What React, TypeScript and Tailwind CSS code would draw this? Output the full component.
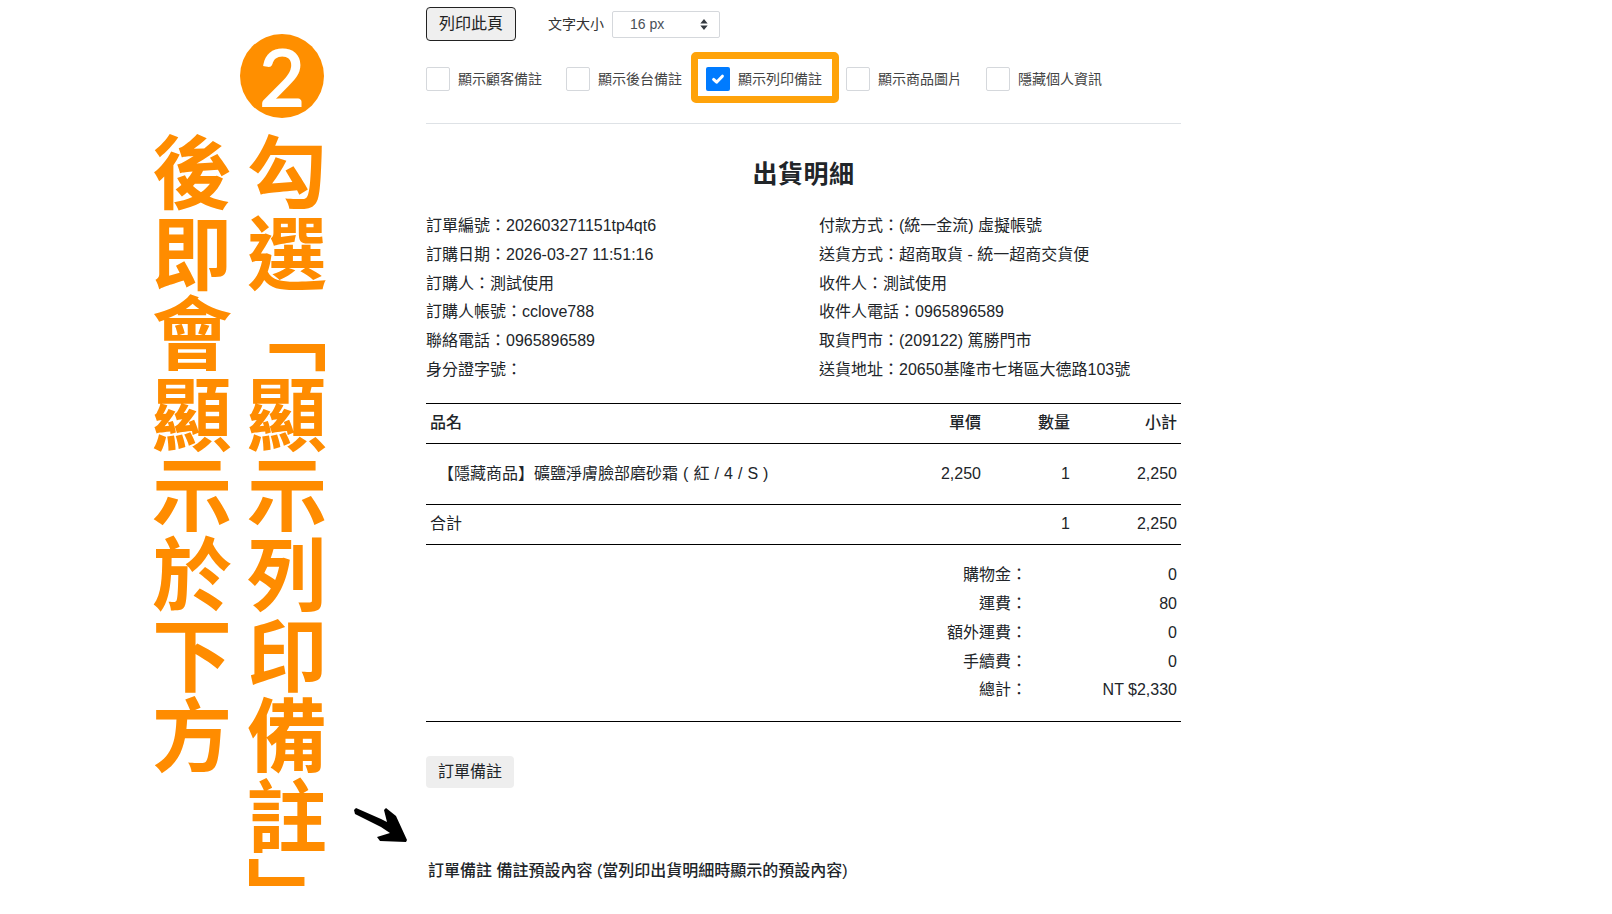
/**
 * Shipping-detail print page with the orange how-to annotation on the left.
 */
const CJK = 'font-["Liberation_Sans","Noto_Sans_CJK_TC",sans-serif]';

const OPTIONS = [
  { label: '顯示顧客備註', checked: false },
  { label: '顯示後台備註', checked: false },
  { label: '顯示列印備註', checked: true },
  { label: '顯示商品圖片', checked: false },
  { label: '隱藏個人資訊', checked: false },
];

const LEFT_INFO = [
  '訂單編號：202603271151tp4qt6',
  '訂購日期：2026-03-27 11:51:16',
  '訂購人：測試使用',
  '訂購人帳號：cclove788',
  '聯絡電話：0965896589',
  '身分證字號：',
];

const RIGHT_INFO = [
  '付款方式：(統一金流) 虛擬帳號',
  '送貨方式：超商取貨 - 統一超商交貨便',
  '收件人：測試使用',
  '收件人電話：0965896589',
  '取貨門市：(209122) 篤勝門市',
  '送貨地址：20650基隆市七堵區大德路103號',
];

const FEES = [
  { label: '購物金：', value: '0' },
  { label: '運費：', value: '80' },
  { label: '額外運費：', value: '0' },
  { label: '手續費：', value: '0' },
  { label: '總計：', value: 'NT $2,330' },
];

function Option({ label, checked }: { label: string; checked: boolean }) {
  return (
    <label className="relative flex w-[110px] items-center gap-2 whitespace-nowrap text-[14px] leading-6 text-[#444]">
      {checked ? (
        <span className="absolute -left-[15px] -top-[15px] h-[51px] w-[148px] rounded-[5px] border-[7px] border-[#ffa30a]" />
      ) : null}
      {checked ? (
        <span className="flex h-6 w-6 shrink-0 items-center justify-center rounded-[2px] bg-[#007bff]">
          <svg viewBox="0 0 16 16" className="h-4 w-4" fill="none" stroke="white" strokeWidth="3" strokeLinecap="round" strokeLinejoin="round">
            <path d="M3.6 8.4 6.6 11.2 12.4 5.2" />
          </svg>
        </span>
      ) : (
        <span className="h-6 w-6 shrink-0 rounded-[2px] border border-[#d5d8dc] bg-white" />
      )}
      {label}
    </label>
  );
}

function Annotation() {
  return (
    <aside className="relative w-[426px] shrink-0 pt-[34px]">
      <div className="ml-[240px] flex h-[84px] w-[84px] items-center justify-center rounded-full bg-[#ff8f00] font-['Lato',sans-serif] text-[78px] font-normal leading-none text-white [-webkit-text-stroke:2px_white]">
        2
      </div>
      {/* closing bracket gets a negative advance: its ink sits high in the em box, the rest would run off the page */}
      <p className="ml-[144px] mt-[14px] whitespace-nowrap font-['Noto_Sans_CJK_TC',sans-serif] text-[80px] font-bold leading-[95px] tracking-[0.4px] text-[#ff8c00] [writing-mode:vertical-rl]">
        勾選「顯示列印備註<span className="tracking-[-24px]">」</span>
        <br />
        後即會顯示於下方
      </p>
      <svg viewBox="0 0 56 36" className="absolute left-[353px] top-[807px] h-9 w-14" fill="black">
        <path d="M1 3 3 1 28 12 34 15 31 3 33 1 43 9 54 33 53 35 27 34 24 30 37 26 28 20 2 7Z" />
      </svg>
    </aside>
  );
}

export default function App() {
  return (
    <div className={`flex h-[914px] overflow-hidden bg-white text-[#212529] ${CJK}`}>
      <Annotation />
      <main className="w-[755px] shrink-0">
        <div className="flex items-center pt-[7px]">
          <button className="h-[34px] w-[90px] rounded-[4px] border border-[#222] bg-[#efefef] text-[16px] text-[#222]">列印此頁</button>
          <span className="ml-8 w-[56px] whitespace-nowrap text-[14px] text-[#333]">文字大小</span>
          <div className="ml-2 flex h-[27px] w-[108px] items-center justify-between rounded-[2px] border border-[#d5d8dc] pl-[17px] pr-[11px] text-[14px] text-[#495057]">
            16 px
            <svg viewBox="0 0 8 12" className="h-[11px] w-2" fill="#343a40">
              <path d="M4 0 8 5H0ZM4 12 0 7H8Z" />
            </svg>
          </div>
        </div>
        <div className="mt-[26px] flex items-center gap-[30px]">
          {OPTIONS.map((o) => (
            <Option key={o.label} label={o.label} checked={o.checked} />
          ))}
        </div>
        <hr className="mt-[32px] border-[#dee2e6]" />

        <h1 className="mt-[32px] text-center text-[25px] font-bold leading-9 tracking-[0.5px]">出貨明細</h1>

        <div className="mt-[20px] flex text-[16px] leading-[28.8px]">
          <div className="w-[393px]">
            {LEFT_INFO.map((t) => <div key={t}>{t}</div>)}
          </div>
          <div>
            {RIGHT_INFO.map((t) => <div key={t}>{t}</div>)}
          </div>
        </div>

        <table className="mt-[18px] w-full border-collapse text-[16px]">
          <thead>
            <tr className="h-[40px] border-y border-black">
              <th className="px-1 text-left font-medium">品名</th>
              <th className="w-[100px] px-1 text-right font-medium">單價</th>
              <th className="w-[89px] px-1 text-right font-medium">數量</th>
              <th className="w-[107px] px-1 text-right font-medium">小計</th>
            </tr>
          </thead>
          <tbody>
            <tr className="h-[61px]">
              <td className="py-1 pl-3 pr-1 [word-spacing:0.6px]">【隱藏商品】礦鹽淨膚臉部磨砂霜 ( 紅 / 4 / S )</td>
              <td className="px-1 text-right">2,250</td>
              <td className="px-1 text-right">1</td>
              <td className="px-1 text-right">2,250</td>
            </tr>
            <tr className="h-[40px] border-y border-black">
              <td className="px-1">合計</td>
              <td />
              <td className="px-1 text-right">1</td>
              <td className="px-1 text-right">2,250</td>
            </tr>
          </tbody>
        </table>

        <div className="mt-[16.5px] border-b border-black pb-[15.5px] text-[16px] leading-[28.8px]">
          {FEES.map((f) => (
            <div key={f.label} className="flex justify-end px-1">
              <span>{f.label}</span>
              <span className="w-[150px] text-right">{f.value}</span>
            </div>
          ))}
        </div>

        <div className="mt-[34px] flex h-8 w-[88px] items-center justify-center rounded-[4px] bg-[#eee] text-[16px]">訂單備註</div>

        <p className="ml-[2px] mt-[71px] text-[16px] font-medium leading-6">
          訂單備註 備註預設內容 (當列印出貨明細時顯示的預設內容)
        </p>
      </main>
    </div>
  );
}
